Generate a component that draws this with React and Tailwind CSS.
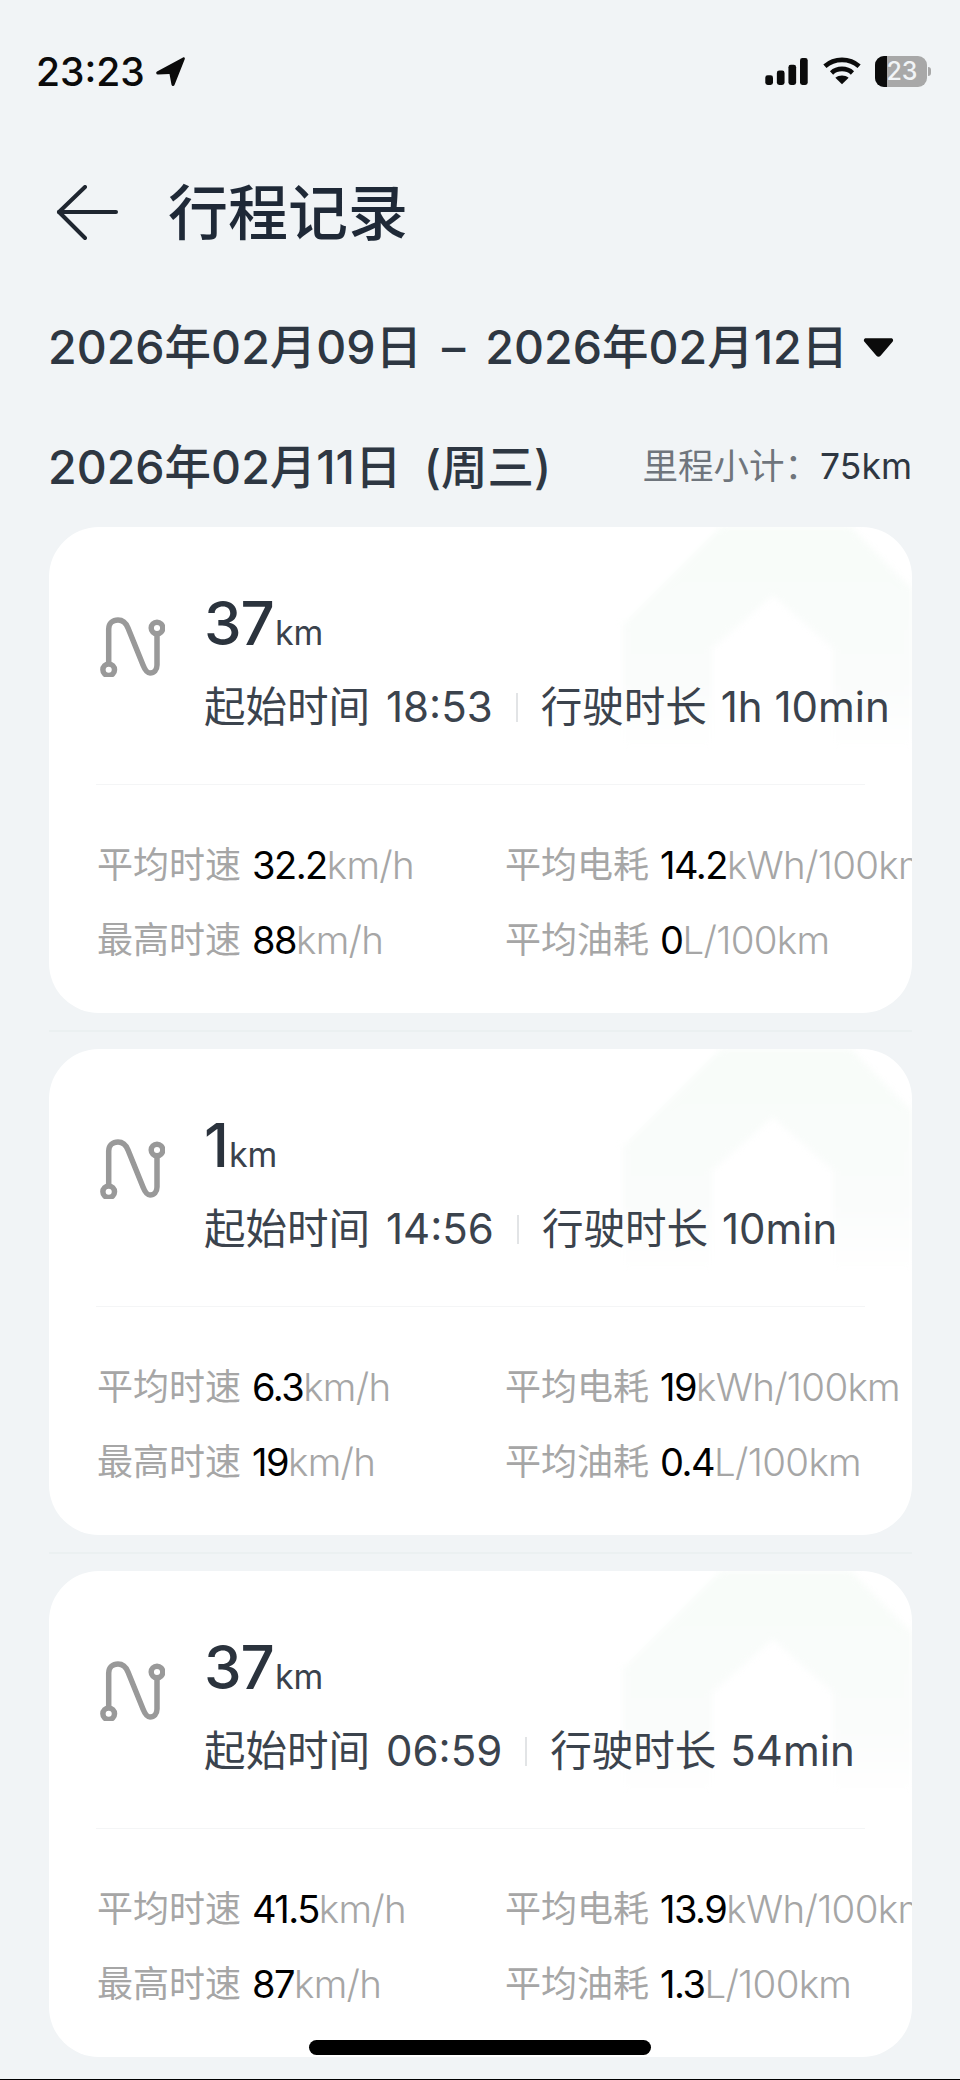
import React from 'react';

const trips = [
  {
    km: '37', start: '18:53', duration: '1h 10min',
    stats: [
      ['平均时速', '32.2', 'km/h'], ['平均电耗', '14.2', 'kWh/100km'],
      ['最高时速', '88', 'km/h'], ['平均油耗', '0', 'L/100km'],
    ],
  },
  {
    km: '1', start: '14:56', duration: '10min',
    stats: [
      ['平均时速', '6.3', 'km/h'], ['平均电耗', '19', 'kWh/100km'],
      ['最高时速', '19', 'km/h'], ['平均油耗', '0.4', 'L/100km'],
    ],
  },
  {
    km: '37', start: '06:59', duration: '54min',
    stats: [
      ['平均时速', '41.5', 'km/h'], ['平均电耗', '13.9', 'kWh/100km'],
      ['最高时速', '87', 'km/h'], ['平均油耗', '1.3', 'L/100km'],
    ],
  },
];

const RouteIcon = () => (
  <svg width="66" height="60" viewBox="18 15 66 60" fill="none" stroke="#999999" strokeWidth="5.5" strokeLinecap="round">
    <path d="M27.7 62V27C27.7 21 32 18 37 18C42 18 45 21 47 26L62 63C64 68 66 71 69 71C73 71 76 68 76 63V32" />
    <circle cx="27.7" cy="67.7" r="5.8" fill="#fff" />
    <circle cx="76" cy="26" r="5.8" fill="#fff" />
  </svg>
);

const HouseMark = () => (
  <svg className="absolute right-0 top-0 blur-[3px]" width="289" height="220" viewBox="0 0 289 220">
    <defs>
      <linearGradient id="fade" x1="0" y1="0" x2="0" y2="1">
        <stop offset="0" stopColor="#f8fcf9" />
        <stop offset="0.7" stopColor="#fafcfb" />
        <stop offset="1" stopColor="#ffffff" />
      </linearGradient>
    </defs>
    <path d="M0 220V98L98 0H228L289 62V220H210V122L150 68L89 122V220Z" fill="url(#fade)" />
  </svg>
);

const TripCard = ({ trip }) => (
  <div className="relative h-[486px] shrink-0 overflow-hidden rounded-[50px] bg-white">
    <HouseMark />
    <div className="relative flex pl-[50px] pt-[61px]">
      <div className="w-[105px] pt-[29px]">
        <RouteIcon />
      </div>
      <div>
        <div className="flex h-[70px] items-baseline text-[#2b333d]">
          <span className="text-[60px] font-medium leading-[70px] tracking-[-1px]">{trip.km}</span>
          <span className="ml-[1px] text-[34px] leading-none text-[#3a424c]">km</span>
        </div>
        <div className="mt-[25px] flex h-[48px] items-center text-[42px] leading-[48px] text-[#3b434d]">
          <span className="text-[41.5px]">起始时间</span>
          <span className="ml-[16px]">{trip.start}</span>
          <span className="mx-[23px] h-[29px] w-[2px] bg-[#e2e4e6]" />
          <span className="text-[41.5px]">行驶时长</span>
          <span className="ml-[14px]">{trip.duration}</span>
        </div>
      </div>
    </div>
    <div className="relative mx-[47px] mt-[53px] h-px bg-[#f4f5f6]" />
    <div className="relative ml-[48px] mt-[57px] grid grid-cols-[408px_408px] gap-y-[29px] whitespace-nowrap">
      {trip.stats.map(([label, value, unit]) => (
        <div key={label} className="flex h-[46px] items-center text-[36px] leading-[46px] text-[#a6a6a6]">
          <span>{label}</span>
          <span className="ml-[11px] text-[38px] tracking-[-1.5px] text-black">{value}</span>
          <span className="text-[38.5px] font-light tracking-[-0.7px]">{unit}</span>
        </div>
      ))}
    </div>
  </div>
);

const StatusBar = () => (
  <div className="flex h-[62px] items-center justify-between pl-[36px] pr-[29px]">
    <div className="flex items-center">
      <span className="text-[39px] font-medium leading-none text-[#0b0b0b]">23:23</span>
      <svg className="ml-[10px]" width="31" height="31" viewBox="0 0 31 31">
        <path d="M2 15.5L28 1.5C29.3 0.9 30.3 2 29.7 3.3L19.5 29C19 30.5 17 30.3 16.5 28.8L14.5 18L3 18.5C1 18.5 0.6 16.3 2 15.5Z" fill="#0b0b0b" />
      </svg>
    </div>
    <div className="flex items-center">
      <svg width="43" height="27" viewBox="0 0 44 28" fill="#0b0b0b">
        <rect x="0" y="18" width="8" height="10" rx="2.5" />
        <rect x="12" y="13" width="8" height="15" rx="2.5" />
        <rect x="24" y="7" width="8" height="21" rx="2.5" />
        <rect x="36" y="0" width="8" height="28" rx="2.5" />
      </svg>
      <svg className="ml-[15px]" width="38" height="30" viewBox="0 0 40 30" fill="none" stroke="#0b0b0b" strokeWidth="5">
        <path d="M2 10C12 1 28 1 38 10" />
        <path d="M9 17C15 11.5 25 11.5 31 17" />
        <path d="M20 29L13 22C17 19 23 19 27 22Z" fill="#0b0b0b" stroke="none" />
      </svg>
      <div className="relative ml-[14px] flex h-[31px] w-[52px] items-center justify-center overflow-hidden rounded-[9px] bg-[#a8a8a8]">
        <div className="absolute inset-y-0 left-0 w-[12px] bg-[#0b0b0b]" />
        <span className="relative pl-[2px] text-[25px] font-medium leading-none text-[#f1f4f6]">23</span>
      </div>
      <div className="ml-[1px] h-[9px] w-[3px] rounded-r-full bg-[#a8a8a8]" />
    </div>
  </div>
);

export default function App() {
  return (
    <div className="relative flex h-[2080px] w-[960px] flex-col overflow-hidden border-b border-black bg-[#f1f4f6] pt-[40px] font-['Inter','Noto_Sans_CJK_SC',sans-serif]">
      <StatusBar />

      <div className="mt-[79px] flex h-[64px] items-center pl-[56px]">
        <svg width="62" height="56" viewBox="0 0 62 56" fill="none" stroke="#1f2630" strokeWidth="4" strokeLinecap="round" strokeLinejoin="round">
          <path d="M29 2L3 27L29 53" />
          <path d="M3 27H60" />
        </svg>
        <h1 className="ml-[50px] text-[60px] font-medium leading-[64px] text-[#1f2937]">行程记录</h1>
      </div>

      <div className="mt-[72px] flex h-[60px] items-center pl-[48px] text-[46.5px] font-medium leading-[60px] text-[#2e3742]">
        <span>2026年02月09日</span>
        <span className="mx-[20px]">–</span>
        <span>2026年02月12日</span>
        <svg className="ml-[15px]" width="31" height="21" viewBox="0 0 30 20">
          <path d="M3 1H27C29 1 29.8 3 28.6 4.4L17 18C15.8 19.3 14.2 19.3 13 18L1.4 4.4C0.2 3 1 1 3 1Z" fill="#0b0b0b" />
        </svg>
      </div>

      <div className="mt-[60px] flex h-[60px] items-center justify-between pl-[48px] pr-[48px] text-[#2e3742]">
        <span className="text-[46.5px] font-medium leading-[60px]">
          2026年02月11日<span className="ml-[10px]"> (周三)</span>
        </span>
        <span className="text-[35.5px] leading-[60px]">
          <span className="text-[#6f757c]">里程小计：</span>75km
        </span>
      </div>

      <div className="ml-[49px] mr-[48px] mt-[30px] flex flex-col">
        {trips.map((trip, i) => (
          <React.Fragment key={trip.start}>
            {i > 0 && (
              <div className="flex h-[36px] shrink-0 items-center">
                <div className="h-[2px] w-full bg-[#ebf0f1]" />
              </div>
            )}
            <TripCard trip={trip} />
          </React.Fragment>
        ))}
      </div>

      <div className="absolute bottom-[24px] left-[309px] h-[15px] w-[342px] rounded-full bg-black" />
    </div>
  );
}
